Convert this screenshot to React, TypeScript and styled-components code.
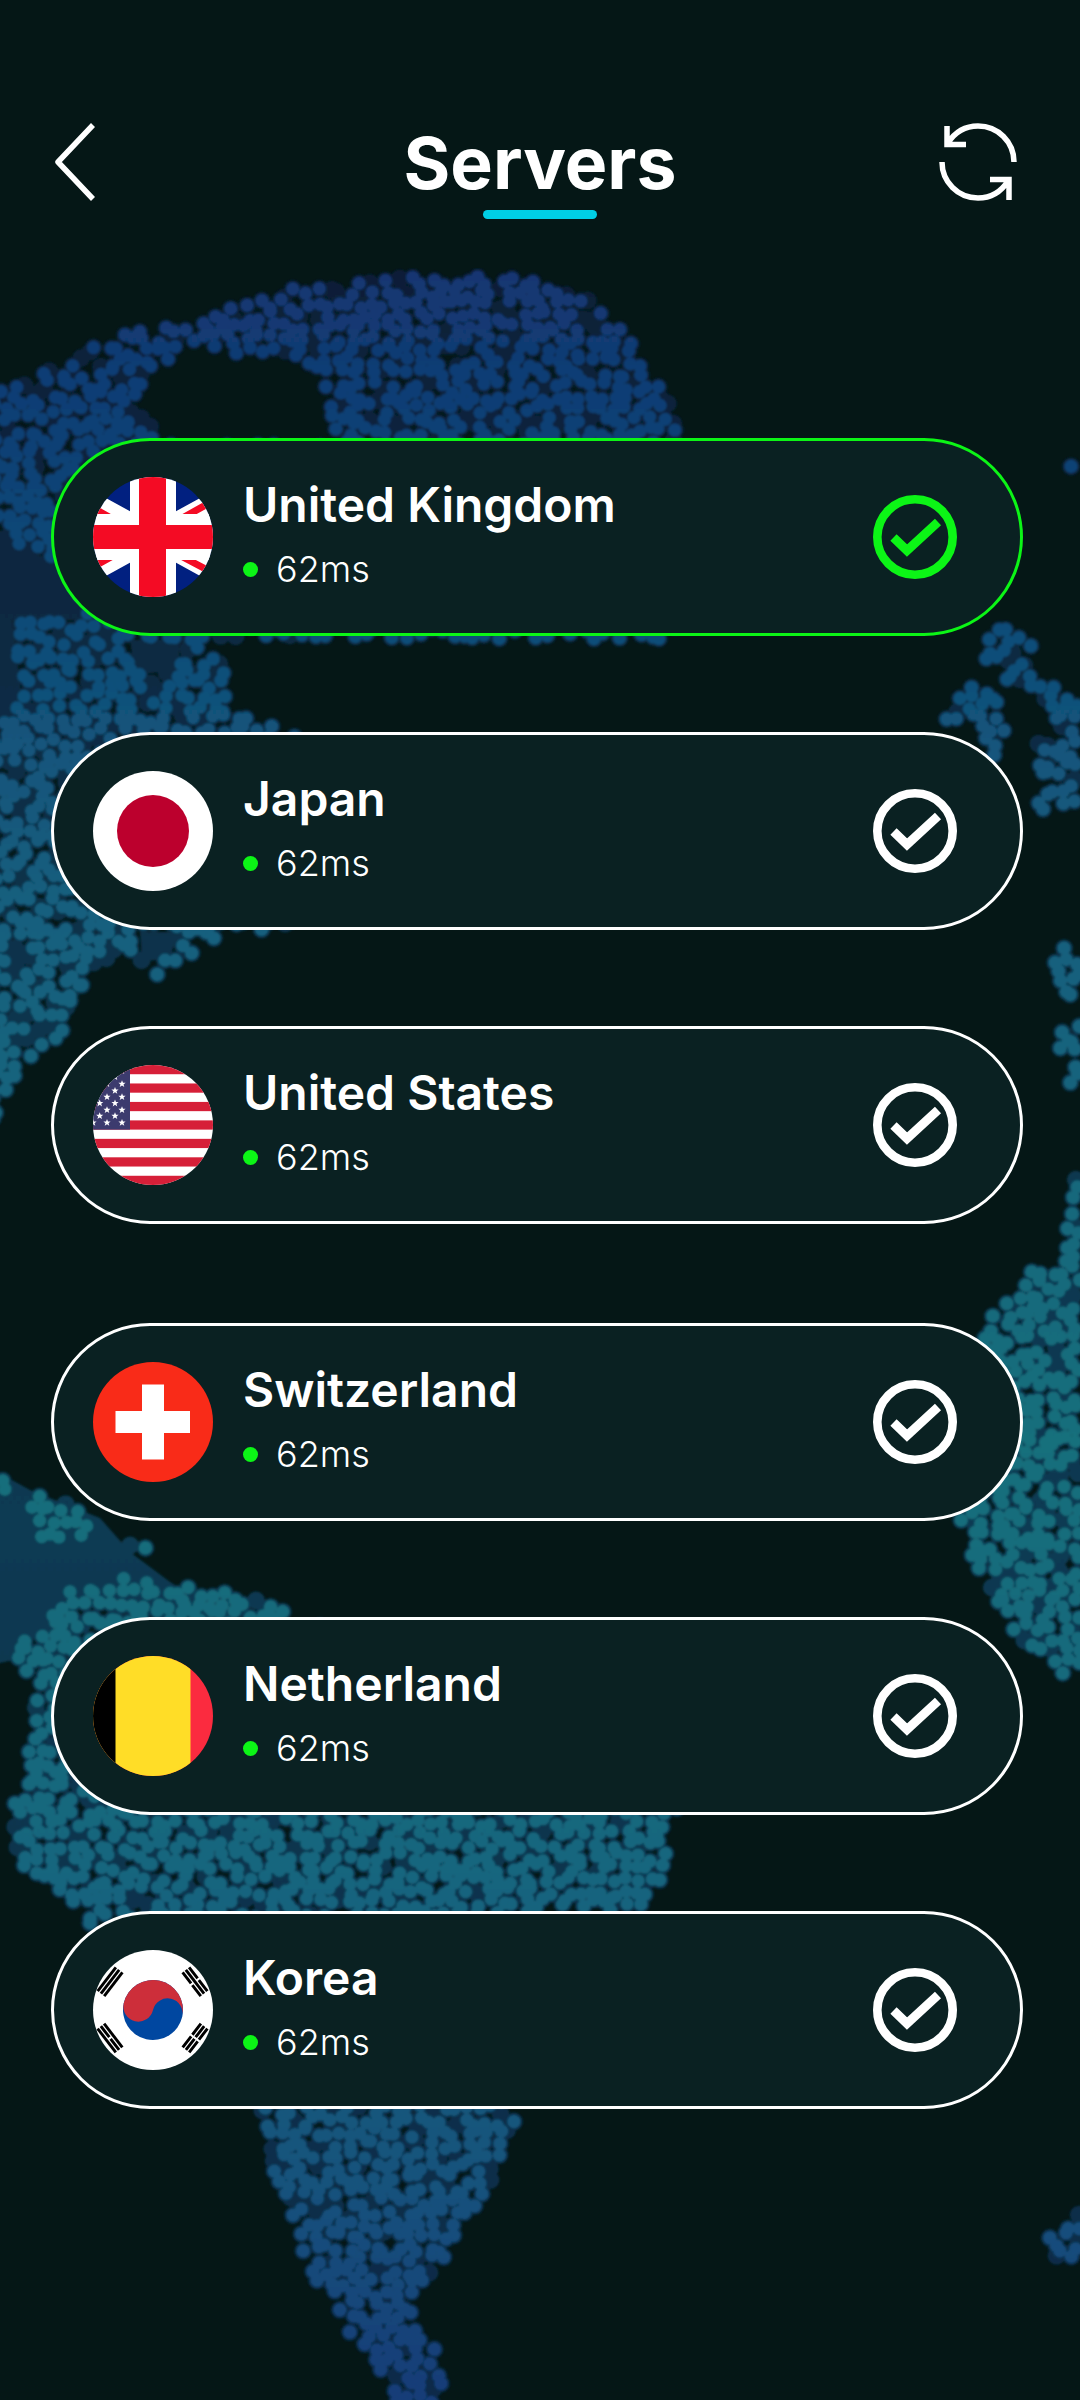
import React from 'react';
import styled, { createGlobalStyle } from 'styled-components';

const GlobalStyle = createGlobalStyle`
  html,
  body {
    margin: 0;
    padding: 0;
    background: #051716;
  }
`;

type Point = [number, number];

/**
 * Land outlines of the dotted world map, in page pixels.
 */
const LANDS: Point[][] = [
  [
    [-10, 385], [20, 377], [53, 365], [105, 338], [174, 318], [239, 307], [294, 288], [381, 278],
    [473, 273], [551, 278], [597, 303], [634, 343], [657, 383], [684, 420], [680, 440], [680, 640],
    [197, 637], [213, 650], [227, 680], [233, 713], [283, 728], [300, 740], [300, 930], [230, 930],
    [200, 950], [157, 978], [143, 967], [123, 953], [97, 967], [77, 1010], [60, 1040], [33, 1053],
    [20, 1080], [3, 1100], [-10, 1125],
  ],
  [[1057, 447], [1067, 454], [1090, 451], [1090, 510], [1073, 478]],
  [
    [977, 640], [1000, 620], [1033, 645], [1037, 680], [1050, 683], [1090, 706], [1090, 800],
    [1040, 810], [1032, 770], [1033, 735], [1060, 735], [1045, 700], [1020, 690], [1000, 680],
    [1005, 665], [985, 665],
  ],
  [[953, 692], [977, 683], [1000, 697], [1007, 750], [1000, 761], [960, 725], [943, 728]],
  [[1050, 951], [1067, 947], [1090, 956], [1090, 996], [1057, 1005], [1050, 982]],
  [[1063, 1023], [1073, 1018], [1090, 1023], [1090, 1090], [1063, 1094], [1067, 1063], [1058, 1045]],
  [
    [1073, 1178], [1090, 1177], [1090, 1670], [1063, 1678], [1047, 1659], [1020, 1643], [997, 1605],
    [980, 1575], [960, 1529], [960, 1400], [980, 1345], [993, 1310], [1017, 1284], [1023, 1268],
    [1060, 1261], [1067, 1234],
  ],
  [
    [69, 1592], [124, 1577], [184, 1583], [230, 1589], [280, 1610], [360, 1640], [700, 1640],
    [675, 1826], [666, 1874], [643, 1910], [92, 1926], [60, 1898], [23, 1868], [9, 1826], [14, 1789],
    [32, 1723], [32, 1686], [14, 1650],
  ],
  [
    [257, 2095], [514, 2095], [516, 2135], [500, 2171], [450, 2250], [413, 2298], [427, 2335],
    [445, 2365], [441, 2410], [400, 2410], [363, 2353], [312, 2274], [271, 2171],
  ],
  [[1043, 2250], [1062, 2215], [1090, 2198], [1090, 2262], [1060, 2262]],
];

/**
 * Scattered patches that carry a few dots above the plain dark shelf.
 */
const PATCHES: Point[][] = [
  [[-10, 1472], [8, 1478], [12, 1490], [-10, 1490]],
  [[22, 1520], [40, 1495], [65, 1500], [100, 1518], [100, 1530], [45, 1545]],
  [[128, 1540], [150, 1540], [150, 1550], [128, 1550]],
];

const SHELF: Point[] = [
  [-10, 1468], [30, 1490], [100, 1518], [130, 1552], [170, 1582], [200, 1600], [60, 1610], [14, 1660], [-10, 1665],
];

// the lake in the north stays bare, the others show the dark shelf
const LAKE: Point[] = [
  [216, 352], [275, 355], [317, 367], [330, 400], [335, 445], [174, 445], [133, 407], [142, 383], [179, 350], [197, 345],
];

const BARE_SHELVES: Point[][] = [
  [[130, 640], [180, 640], [178, 670], [135, 675]],
  [[140, 932], [178, 932], [170, 958], [142, 962]],
  [[-10, 620], [12, 620], [22, 700], [-10, 740]],
  [[-10, 545], [60, 560], [90, 620], [-10, 620]],
];

const inside = (x: number, y: number, poly: Point[]) => {
  let hit = false;
  for (let i = 0, j = poly.length - 1; i < poly.length; j = i++) {
    const [xi, yi] = poly[i];
    const [xj, yj] = poly[j];
    if (yi > y !== yj > y && x < ((xj - xi) * (y - yi)) / (yj - yi) + xi) hit = !hit;
  }
  return hit;
};

const outline = (poly: Point[]) => `M${poly.map((p) => p.join(' ')).join('L')}Z`;

const circle = (x: number, y: number, r: number) =>
  `M${(x - r).toFixed(1)} ${y.toFixed(1)}a${r} ${r} 0 1 0 ${2 * r} 0a${r} ${r} 0 1 0 ${-2 * r} 0`;

// seeded so that the map stays the same between renders
const buildDots = () => {
  let seed = 20240611;
  const rand = () => {
    seed = (seed + 0x6d2b79f5) | 0;
    let t = Math.imul(seed ^ (seed >>> 15), 1 | seed);
    t = (t + Math.imul(t ^ (t >>> 7), 61 | t)) ^ t;
    return ((t ^ (t >>> 14)) >>> 0) / 4294967296;
  };
  const areas = [...LANDS, ...PATCHES];
  const holes = [LAKE, ...BARE_SHELVES];
  let dots = '';
  let shade = '';
  for (let y = 270; y < 2405; y += 11.5) {
    for (let x = -6; x < 1086; x += 11.5) {
      const px = x + (rand() - 0.5) * 10;
      const py = y + (rand() - 0.5) * 10;
      const skip = rand() < 0.13;
      if (!areas.some((poly) => inside(px, py, poly))) continue;
      if (holes.some((poly) => inside(px, py, poly))) continue;
      shade += circle(px, py, 9);
      if (!skip) dots += circle(px, py, 6.6);
    }
  }
  return { dots, shade };
};

const WorldMap = () => {
  const { dots, shade } = React.useMemo(buildDots, []);
  return (
    <MapCanvas viewBox="0 0 1080 2400">
      <defs>
        <linearGradient id="dotFill" gradientUnits="userSpaceOnUse" x1="0" y1="270" x2="0" y2="2400">
          <stop offset="0" stopColor="#123672" />
          <stop offset="0.15" stopColor="#114a78" />
          <stop offset="0.3" stopColor="#135f7e" />
          <stop offset="0.55" stopColor="#176f7b" />
          <stop offset="0.75" stopColor="#15667e" />
          <stop offset="0.9" stopColor="#13527c" />
          <stop offset="1" stopColor="#123c78" />
        </linearGradient>
        <linearGradient id="shelfFill" gradientUnits="userSpaceOnUse" x1="0" y1="270" x2="0" y2="2400">
          <stop offset="0" stopColor="#071f38" />
          <stop offset="0.2" stopColor="#082b44" />
          <stop offset="0.4" stopColor="#093850" />
          <stop offset="0.6" stopColor="#0a3a52" />
          <stop offset="1" stopColor="#072a48" />
        </linearGradient>
        <filter id="dotSoft" x="0" y="0" width="100%" height="100%">
          <feGaussianBlur stdDeviation="0.8" />
        </filter>
      </defs>
      <g filter="url(#dotSoft)">
        <path d={outline(SHELF)} fill="url(#shelfFill)" />
        {BARE_SHELVES.map((poly, i) => (
          <path key={i} d={outline(poly)} fill="url(#shelfFill)" />
        ))}
        <path d={shade} fill="url(#shelfFill)" />
        <path d={dots} fill="url(#dotFill)" />
      </g>
    </MapCanvas>
  );
};

/**
 * Flags, each drawn on a 120 unit square and cut round by the frame.
 */
const UkFlag = () => (
  <FlagSvg viewBox="0 0 120 120">
    <rect width="120" height="120" fill="#012080" />
    <path d="M0 27L120 93M0 93L120 27" stroke="#fff" strokeWidth="23" />
    <path d="M0 31L34 50M120 24L84 44M0 90L36 70M120 96L86 78" stroke="#f40b24" strokeWidth="7" />
    <rect x="37" width="46" height="120" fill="#fff" />
    <rect y="37" width="120" height="46" fill="#fff" />
    <rect x="46" width="27" height="120" fill="#f40b24" />
    <rect y="48" width="120" height="24" fill="#f40b24" />
  </FlagSvg>
);

const JapanFlag = () => (
  <FlagSvg viewBox="0 0 120 120">
    <rect width="120" height="120" fill="#fff" />
    <circle cx="60" cy="60" r="36" fill="#bc002d" />
  </FlagSvg>
);

const STAR_POSITIONS: Point[] = [
  [29, 6], [22, 12], [29, 19], [22, 25.7], [14, 19], [14, 32], [29, 32], [6.7, 38.3], [22, 38.3],
  [6.7, 25.7], [14, 45], [29, 45], [6.7, 51], [22, 51], [14, 57.7], [29, 57.7], [0, 57.7],
];

const STAR = '0,-3.8 1,-1.2 3.6,-1.2 1.5,0.5 2.3,3.1 0,1.5 -2.3,3.1 -1.5,0.5 -3.6,-1.2 -1,-1.2';

const UsFlag = () => (
  <FlagSvg viewBox="0 0 120 120">
    <rect width="120" height="120" fill="#fff" />
    {Array.from({ length: 7 }, (_, i) => (
      <rect key={i} y={(i * 240) / 13} width="120" height={120 / 13} fill="#d61f38" />
    ))}
    <rect width="37" height={(120 / 13) * 7} fill="#3c3b6e" />
    {STAR_POSITIONS.map(([x, y]) => (
      <polygon key={`${x}-${y}`} points={STAR} transform={`translate(${x} ${y})`} fill="#fff" />
    ))}
  </FlagSvg>
);

const SwissFlag = () => (
  <FlagSvg viewBox="0 0 120 120">
    <rect width="120" height="120" fill="#f92b18" />
    <rect x="49" y="22.5" width="22" height="75" fill="#fff" />
    <rect x="22.5" y="49" width="74.5" height="22" fill="#fff" />
  </FlagSvg>
);

const BelgiumFlag = () => (
  <FlagSvg viewBox="0 0 120 120">
    <rect width="120" height="120" fill="#fb2b3f" />
    <rect width="97.5" height="120" fill="#ffdd27" />
    <rect width="22.5" height="120" fill="#000" />
  </FlagSvg>
);

// one trigram of the Korean flag: true is a whole bar, false a broken one
const Trigram = ({ x, y, angle, bars }: { x: number; y: number; angle: number; bars: boolean[] }) => (
  <g transform={`translate(${x} ${y}) rotate(${angle})`} fill="#000">
    {bars.map((whole, i) =>
      whole ? (
        <rect key={i} x="-15" y={-5.5 + i * 4.1} width="30" height="2.9" />
      ) : (
        <path key={i} d={`M-15 ${-5.5 + i * 4.1}h14v2.9h-14zM1 ${-5.5 + i * 4.1}h14v2.9h-14z`} />
      ),
    )}
  </g>
);

const KoreaFlag = () => (
  <FlagSvg viewBox="0 0 120 120">
    <rect width="120" height="120" fill="#fff" />
    <g transform="translate(60 60) rotate(13)">
      <circle r="30" fill="#0047a0" />
      <path d="M-30 0A30 30 0 0 1 30 0A15 15 0 0 0 0 0A15 15 0 0 1 -30 0Z" fill="#cd2e3a" />
    </g>
    <Trigram x={17} y={31.7} angle={-52.6} bars={[true, true, true]} />
    <Trigram x={102} y={31.7} angle={52.6} bars={[false, true, false]} />
    <Trigram x={17} y={88} angle={52.6} bars={[true, false, true]} />
    <Trigram x={102} y={88} angle={-52.6} bars={[false, false, false]} />
  </FlagSvg>
);

const CheckIcon = ({ selected }: { selected?: boolean }) => (
  <CheckSvg $selected={selected} viewBox="0 0 84 84">
    <circle cx="42" cy="42" r="37.7" fill="none" stroke="currentColor" strokeWidth="8.6" />
    <path d="M20.5 42.5L34 55.5L65 27" fill="none" stroke="currentColor" strokeWidth="9" />
  </CheckSvg>
);

const SERVERS = [
  { name: 'United Kingdom', Flag: UkFlag, selected: true, offset: 0 },
  { name: 'Japan', Flag: JapanFlag, offset: 96 },
  { name: 'United States', Flag: UsFlag, offset: 96 },
  { name: 'Switzerland', Flag: SwissFlag, offset: 99 },
  { name: 'Netherland', Flag: BelgiumFlag, offset: 96 },
  { name: 'Korea', Flag: KoreaFlag, offset: 96 },
];

export default function App() {
  return (
    <Screen>
      <GlobalStyle />
      <WorldMap />
      <Content>
        <Header>
          <IconButton>
            <svg width="40" height="78" viewBox="0 0 40 78" fill="none">
              <path d="M38 2L3 39L38 76" stroke="#fff" strokeWidth="5.5" strokeLinejoin="round" />
            </svg>
          </IconButton>
          <TitleBlock>
            <Title>Servers</Title>
            <TitleMark />
          </TitleBlock>
          <RefreshButton>
            <svg width="78" height="80" viewBox="0 0 78 80" fill="none">
              <path d="M75 39C75 19 59 3 39 3C27 3 16 9 9 20M8 3V21.5H27" stroke="#fff" strokeWidth="5.5" />
              <path d="M3 39C3 59 19 75 39 75C51 75 62 69 69 58M70 77V56.5H51" stroke="#fff" strokeWidth="5.5" />
            </svg>
          </RefreshButton>
        </Header>
        <ServerList>
          {SERVERS.map(({ name, Flag, selected, offset }) => (
            <ServerCard key={name} $selected={selected} $offset={offset}>
              <FlagFrame>
                <Flag />
              </FlagFrame>
              <ServerInfo>
                <ServerName>{name}</ServerName>
                <ServerMeta>
                  <PingDot />
                  <PingValue>62ms</PingValue>
                </ServerMeta>
              </ServerInfo>
              <CheckIcon selected={selected} />
            </ServerCard>
          ))}
        </ServerList>
      </Content>
    </Screen>
  );
}

const Screen = styled.div`
  position: relative;
  width: 1080px;
  height: 2400px;
  overflow: hidden;
  background: #051716;
  font-family: Inter, 'Liberation Sans', sans-serif;
  color: #fff;
`;

const MapCanvas = styled.svg`
  position: absolute;
  inset: 0;
  width: 1080px;
  height: 2400px;
`;

const Content = styled.div`
  position: relative;
  display: flex;
  flex-direction: column;
`;

const Header = styled.div`
  display: grid;
  grid-template-columns: 1fr auto 1fr;
  align-items: start;
  height: 438px;
  padding: 123px 55px 0;
  box-sizing: border-box;
`;

const IconButton = styled.div`
  display: flex;
  justify-content: flex-start;
`;

const RefreshButton = styled(IconButton)`
  justify-content: flex-end;
  padding-right: 8px;
`;

const TitleBlock = styled.div`
  display: flex;
  flex-direction: column;
  align-items: center;
`;

const Title = styled.div`
  font-size: 71.5px;
  font-weight: 700;
  line-height: 80px;
`;

const TitleMark = styled.div`
  width: 114px;
  height: 9px;
  margin-top: 7px;
  border-radius: 5px;
  background: #00cfe5;
`;

const ServerList = styled.div`
  display: flex;
  flex-direction: column;
  padding: 0 57.5px 0 50.5px;
`;

const ServerCard = styled.div<{ $selected?: boolean; $offset: number }>`
  display: flex;
  align-items: center;
  height: 198px;
  margin-top: ${(p) => p.$offset}px;
  padding: 0 62.5px 0 39.5px;
  box-sizing: border-box;
  border: 3px solid ${(p) => (p.$selected ? '#0cf516' : '#fff')};
  border-radius: 99px;
  background: #0a2122;
`;

const FlagFrame = styled.div`
  flex-shrink: 0;
  width: 120px;
  height: 120px;
  margin-right: 30px;
  border-radius: 50%;
  overflow: hidden;
`;

const FlagSvg = styled.svg`
  display: block;
  width: 120px;
  height: 120px;
`;

const ServerInfo = styled.div`
  flex: 1;
  display: flex;
  flex-direction: column;
  gap: 13px;
  padding-bottom: 7px;
`;

const ServerName = styled.div`
  font-size: 48px;
  font-weight: 600;
  line-height: 58px;
`;

const ServerMeta = styled.div`
  display: flex;
  align-items: center;
  gap: 18px;
`;

const PingDot = styled.span`
  width: 15px;
  height: 15px;
  border-radius: 50%;
  background: #0cf516;
`;

const PingValue = styled.span`
  font-size: 36px;
  font-weight: 300;
  line-height: 44px;
`;

const CheckSvg = styled.svg<{ $selected?: boolean }>`
  flex-shrink: 0;
  width: 84px;
  height: 84px;
  color: ${(p) => (p.$selected ? '#0cf516' : '#fff')};
`;
